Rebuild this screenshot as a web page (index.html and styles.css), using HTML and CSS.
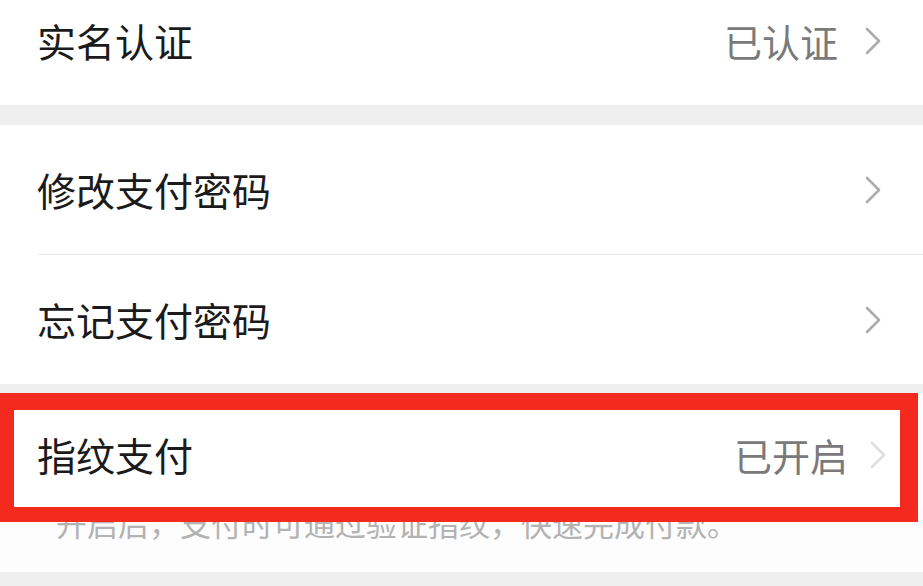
FILE: index.html
```html
<!DOCTYPE html>
<html lang="zh-CN">
<head>
<meta charset="utf-8">
<title>支付设置</title>
<link rel="stylesheet" href="styles.css">
</head>
<body>
<div class="page">
  <div class="group">
    <div class="row row-first">
      <span class="label">实名认证</span>
      <span class="value">已认证</span>
      <svg class="chev" viewBox="0 0 16 28" width="16" height="28"><polyline points="2,2 14,14 2,26" /></svg>
    </div>
  </div>
  <div class="band band-lg"></div>
  <div class="group">
    <div class="row">
      <span class="label">修改支付密码</span>
      <svg class="chev" viewBox="0 0 16 28" width="16" height="28"><polyline points="2,2 14,14 2,26" /></svg>
    </div>
    <div class="divider"></div>
    <div class="row">
      <span class="label">忘记支付密码</span>
      <svg class="chev" viewBox="0 0 16 28" width="16" height="28"><polyline points="2,2 14,14 2,26" /></svg>
    </div>
  </div>
  <div class="band band-sm"></div>
  <div class="group">
    <div class="row row-finger">
      <span class="label">指纹支付</span>
      <span class="value value-finger">已开启</span>
      <svg class="chev chev-light" viewBox="0 0 16 28" width="16" height="28"><polyline points="2,2 14,14 2,26" /></svg>
    </div>
  </div>
  <div class="note">开启后，支付时可通过验证指纹，快速完成付款。</div>
  <div class="band band-bottom"></div>
  <div class="highlight"></div>
</div>
</body>
</html>
```

FILE: styles.css
```css
html, body {
  margin: 0;
  padding: 0;
  background: #ffffff;
}

.page {
  position: relative;
  width: 923px;
  height: 586px;
  overflow: hidden;
  font-family: "Noto Sans CJK SC", "Noto Sans", sans-serif;
  background: #ffffff;
}

.group {
  background: #ffffff;
}

.row {
  display: flex;
  align-items: center;
  height: 129px;
  padding: 0 42px 0 37px;
  box-sizing: border-box;
}

.row-first {
  height: 105px;
  padding-bottom: 24px;
}

.row-finger {
  height: 123px;
  padding-right: 37px;
}

.label {
  flex: 1;
  font-size: 39px;
  color: #1b1b1b;
  line-height: 1;
}

.value {
  font-size: 38px;
  color: #7a7a7a;
  line-height: 1;
  margin-right: 27px;
}

.value-finger {
  margin-right: 22px;
}

.chev {
  display: block;
  flex: none;
}

.chev polyline {
  fill: none;
  stroke: #acacac;
  stroke-width: 2.6;
  stroke-linecap: round;
  stroke-linejoin: round;
}

.chev-light polyline {
  stroke: #dedede;
}

.divider {
  height: 1px;
  margin-left: 38px;
  background: #ebebeb;
}

.band {
  background: #efefef;
}

.band-lg {
  height: 20px;
}

.band-sm {
  height: 9px;
}

.band-bottom {
  height: 20px;
}

.note {
  height: 65px;
  margin-top: -9px;
  padding-left: 56px;
  font-size: 31px;
  line-height: 31px;
  box-sizing: border-box;
  color: #b3b3b3;
  background: #fdfdfd;
}

.highlight {
  position: absolute;
  left: 0;
  top: 393px;
  width: 918px;
  height: 129px;
  box-sizing: border-box;
  border-style: solid;
  border-color: #f52a1f;
  border-width: 17px 18px 15px 14px;
}
```
